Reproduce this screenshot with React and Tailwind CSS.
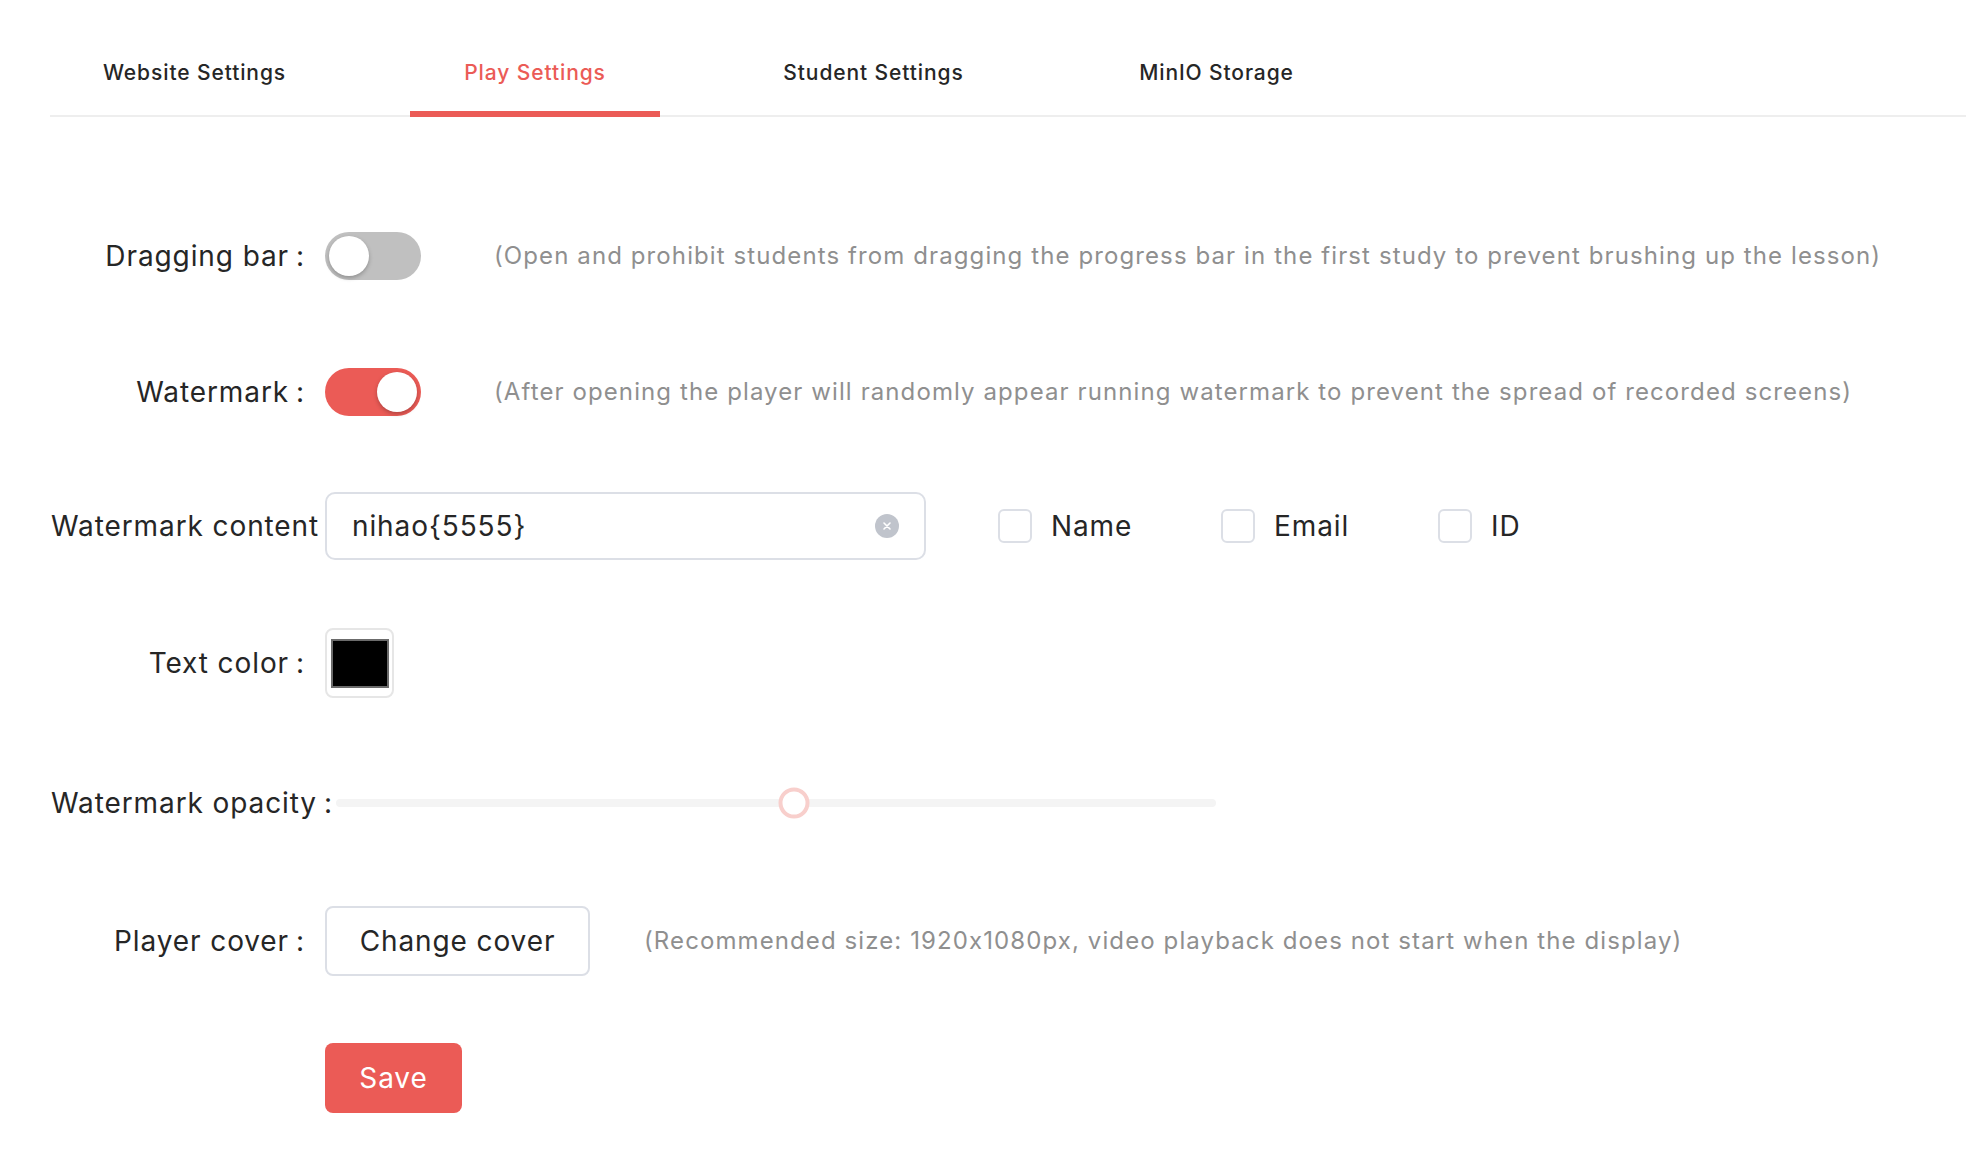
import { useState } from 'react'

const tabs = [
  { label: 'Website Settings', w: 'w-[289px]' },
  { label: 'Play Settings', w: 'w-[250px]' },
  { label: 'Student Settings', w: 'w-[285px]' },
  { label: 'MinIO Storage', w: 'w-[259px]' },
]

function Label({ children, wide = false }) {
  return (
    <div
      className={
        'w-[275px] shrink-0 flex whitespace-nowrap text-[28px] tracking-[0.9px] text-[#262626] ' +
        (wide ? 'justify-start pl-px' : 'justify-end pr-[20px]')
      }
    >
      <span>{children}</span>
      <span className="ml-[7px]">:</span>
    </div>
  )
}

function Switch({ on, onToggle }) {
  return (
    <button
      type="button"
      onClick={onToggle}
      className={
        'relative w-[96px] h-[48px] rounded-full shrink-0 transition-colors ' +
        (on ? 'bg-[#eb5b56]' : 'bg-[#c0c0c0]')
      }
    >
      <span
        className={
          'absolute top-[4px] w-[40px] h-[40px] rounded-full bg-white shadow-[0_2px_4px_rgba(0,0,0,0.25)] transition-all ' +
          (on ? 'left-[52px]' : 'left-[4px]')
        }
      />
    </button>
  )
}

function Checkbox({ label, className }) {
  const [checked, setChecked] = useState(false)
  return (
    <label className={'flex items-center gap-[19px] cursor-pointer ' + className}>
      <span
        onClick={() => setChecked(!checked)}
        className={
          'w-[34px] h-[34px] rounded-[6px] border-2 ' +
          (checked ? 'bg-[#eb5b56] border-[#eb5b56]' : 'bg-white border-[#dcdfe6]')
        }
      />
      <span className="text-[28px] tracking-[0.9px] text-[#262626]">{label}</span>
    </label>
  )
}

function Hint({ children, className = '' }) {
  return (
    <p className={'text-[24px] tracking-[1.1px] text-[#8f8f8f] whitespace-nowrap ' + className}>
      {children}
    </p>
  )
}

export default function App() {
  const [drag, setDrag] = useState(false)
  const [mark, setMark] = useState(true)
  const [content, setContent] = useState('nihao{5555}')

  return (
    <div className="min-h-[1174px] bg-white font-['Inter','Noto_Sans',sans-serif] [font-feature-settings:'calt'_0] text-[#262626]">
      {/* tabs */}
      <div className="ml-[50px] pt-[29px] flex gap-[71px] border-b-2 border-[#eeeeee]">
        {tabs.map((t, i) => (
          <div
            key={t.label}
            className={
              'relative -mb-[2px] h-[88px] flex items-center justify-center text-[21px] tracking-[0.9px] font-medium ' +
              t.w +
              (i === 1 ? ' text-[#eb5b56]' : ' text-[#262626]')
            }
          >
            {t.label}
            {i === 1 && <span className="absolute left-0 right-0 bottom-0 h-[6px] bg-[#eb5b56]" />}
          </div>
        ))}
      </div>

      <div className="pl-[50px]">
        {/* Dragging bar */}
        <div className="mt-[104px] h-[70px] flex items-center">
          <Label>Dragging bar</Label>
          <Switch on={drag} onToggle={() => setDrag(!drag)} />
          <Hint className="ml-[73px]">
            (Open and prohibit students from dragging the progress bar in the first study to prevent brushing up the lesson)
          </Hint>
        </div>

        {/* Watermark */}
        <div className="mt-[66px] h-[70px] flex items-center">
          <Label>Watermark</Label>
          <Switch on={mark} onToggle={() => setMark(!mark)} />
          <Hint className="ml-[73px]">
            (After opening the player will randomly appear running watermark to prevent the spread of recorded screens)
          </Hint>
        </div>

        {/* Watermark content */}
        <div className="mt-[64px] h-[70px] flex items-center">
          <Label wide>Watermark content</Label>
          <div className="relative z-10 w-[601px] h-[68px] flex items-center rounded-[10px] border-2 border-[#dcdfe6] bg-white pl-[25px] pr-[25px]">
            <input
              value={content}
              onChange={(e) => setContent(e.target.value)}
              className="flex-1 min-w-0 bg-transparent outline-none text-[28px] tracking-[0.9px] text-[#262626]"
            />
            <button
              type="button"
              onClick={() => setContent('')}
              className="w-[24px] h-[24px] rounded-full bg-[#c0c4cc] flex items-center justify-center"
            >
              <svg width="10" height="10" viewBox="0 0 10 10">
                <path d="M2 2 L8 8 M8 2 L2 8" stroke="white" strokeWidth="1.6" strokeLinecap="round" />
              </svg>
            </button>
          </div>
          <Checkbox label="Name" className="ml-[72px] w-[223px]" />
          <Checkbox label="Email" className="w-[217px]" />
          <Checkbox label="ID" />
        </div>

        {/* Text color */}
        <div className="mt-[67px] h-[70px] flex items-center">
          <Label>Text color</Label>
          <div className="w-[69px] h-[70px] rounded-[8px] border-2 border-[#e6e6e6] flex items-center justify-center">
            <div className="w-[58px] h-[49px] bg-black border-2 border-[#6b6b6b]" />
          </div>
        </div>

        {/* Watermark opacity */}
        <div className="mt-[70px] h-[70px] flex items-center">
          <Label wide>Watermark opacity</Label>
          <div className="relative ml-[11px] w-[880px] h-[8px] rounded-full bg-[#f4f4f4]">
            <span className="absolute top-1/2 left-[52%] -translate-x-1/2 -translate-y-1/2 w-[31px] h-[31px] rounded-full bg-white border-[4px] border-[#f8cfcc]" />
          </div>
        </div>

        {/* Player cover */}
        <div className="mt-[68px] h-[70px] flex items-center">
          <Label>Player cover</Label>
          <button
            type="button"
            className="w-[265px] h-[70px] rounded-[8px] border-2 border-[#dcdfe6] bg-white text-[28px] tracking-[0.9px] text-[#262626]"
          >
            Change cover
          </button>
          <Hint className="ml-[54px]">
            (Recommended size: 1920x1080px, video playback does not start when the display)
          </Hint>
        </div>

        {/* Save */}
        <div className="mt-[67px] h-[70px] flex items-center">
          <div className="w-[275px] shrink-0" />
          <button
            type="button"
            className="w-[137px] h-[70px] rounded-[8px] bg-[#eb5b56] text-white text-[28px] tracking-[0.9px]"
          >
            Save
          </button>
        </div>
      </div>
    </div>
  )
}
